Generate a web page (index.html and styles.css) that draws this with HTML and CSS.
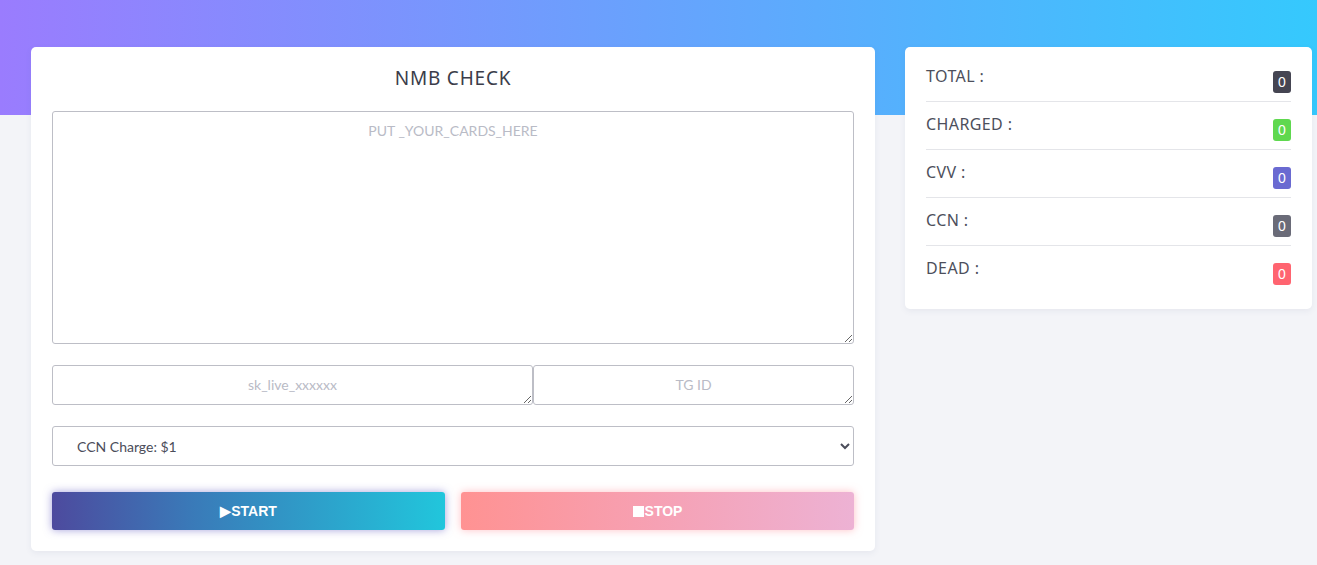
FILE: index.html
```html
<!DOCTYPE html>
<html lang="en">

<head>
    <meta charset="UTF-8">
    <meta name="viewport" content="width=device-width, initial-scale=1.0">
    <title>NMB CHECK</title>
    <link rel="stylesheet" href="styles.css">
</head>

<body>
    <main class="wrap">
        <section class="card checker">
            <h1 class="title">NMB CHECK</h1>
            <textarea class="field cards" placeholder="PUT _YOUR_CARDS_HERE"></textarea>
            <div class="pair">
                <textarea class="field sk" placeholder="sk_live_xxxxxx"></textarea>
                <textarea class="field tg" placeholder="TG ID"></textarea>
            </div>
            <select class="field charge">
                <option>CCN Charge: $1</option>
            </select>
            <div class="actions">
                <button type="button" class="btn start">&#9654;START</button>
                <button type="button" class="btn stop"><span class="sq"></span>STOP</button>
            </div>
        </section>

        <aside class="card stats">
            <div class="stat"><span>TOTAL :</span><b class="badge total">0</b></div>
            <div class="stat"><span>CHARGED :</span><b class="badge charged">0</b></div>
            <div class="stat"><span>CVV :</span><b class="badge cvv">0</b></div>
            <div class="stat"><span>CCN :</span><b class="badge ccn">0</b></div>
            <div class="stat"><span>DEAD :</span><b class="badge dead">0</b></div>
        </aside>
    </main>
</body>

</html>
```

FILE: styles.css
```css
/* General styles */

* {
    box-sizing: border-box;
}

body {
    margin: 0;
    height: 565px;
    overflow: hidden;
    font-family: "Noto Sans", sans-serif;
    background-color: #f3f4f8;
    background-image: linear-gradient(to right, #9a7cfe, #6c9ffd 45%, #35c9fd);
    background-size: 100% 115px;
    background-repeat: no-repeat;
}

.wrap {
    display: flex;
    align-items: flex-start;
    gap: 30px;
    padding: 47px 0 0 31px;
}

.card {
    background-color: #fff;
    border-radius: 5px;
    box-shadow: 0 2px 6px rgba(80, 90, 130, 0.08);
}

.checker {
    width: 844px;
    padding: 0 21px 21px;
    display: flex;
    flex-direction: column;
}

.title {
    margin: 0;
    height: 64px;
    line-height: 62px;
    text-align: center;
    font-size: 19px;
    font-weight: 400;
    color: #3b3d4a;
    letter-spacing: 0.8px;
}

.field {
    display: block;
    width: 100%;
    border: 1px solid #bdbec6;
    border-radius: 3px;
    background: #fff;
    font-family: Lato, sans-serif;
    font-size: 14px;
    color: #4b4d5a;
    text-align: center;
    outline: none;
}

.field::placeholder {
    color: #b9bbc6;
}

.cards {
    height: 233px;
    padding: 10px;
    resize: vertical;
}

.pair {
    display: flex;
    margin-top: 21px;
}

.pair .field {
    height: 40px;
    padding: 10px;
}

.sk {
    width: 481px;
}

.tg {
    flex: 1;
}

.charge {
    margin-top: 21px;
    height: 40px;
    padding: 0 20px;
    text-align: left;
}

.actions {
    display: flex;
    gap: 16px;
    margin-top: 26px;
}

.btn {
    flex: 1;
    height: 38px;
    border: none;
    border-radius: 3px;
    color: #fff;
    font-family: "Liberation Sans", Arial, sans-serif;
    font-size: 14px;
    font-weight: bold;
    cursor: pointer;
}

.sq {
    display: inline-block;
    width: 11px;
    height: 11px;
    margin-right: 1px;
    background-color: #fff;
    vertical-align: -1px;
}

.start {
    background: linear-gradient(to right, #4d4a9e, #3a79b8 35%, #21c6dc);
    box-shadow: 0 0 8px rgba(90, 80, 190, 0.55);
}

.stop {
    background: linear-gradient(to right, #ff9292, #f6a1b4 50%, #edb2d4);
    box-shadow: 0 0 8px rgba(255, 140, 150, 0.55);
}

.stats {
    width: 407px;
    padding: 7px 21px 15px;
}

.stat {
    display: flex;
    justify-content: space-between;
    align-items: flex-start;
    height: 48px;
    padding-top: 11px;
    border-bottom: 1px solid #e4e5e9;
    font-size: 16px;
    letter-spacing: 0.4px;
    color: #4d4f5c;
}

.stat:last-child {
    border-bottom: none;
}

.badge {
    margin-top: 6px;
    width: 18px;
    height: 22px;
    line-height: 22px;
    border-radius: 3px;
    text-align: center;
    font-family: "Liberation Sans", Arial, sans-serif;
    font-size: 14px;
    font-weight: normal;
    letter-spacing: 0;
    color: #fff;
}

.total {
    background-color: #454552;
}

.charged {
    background-color: #5fd84f;
}

.cvv {
    background-color: #6a6ad1;
}

.ccn {
    background-color: #6a6b78;
}

.dead {
    background-color: #ff6470;
}
```
